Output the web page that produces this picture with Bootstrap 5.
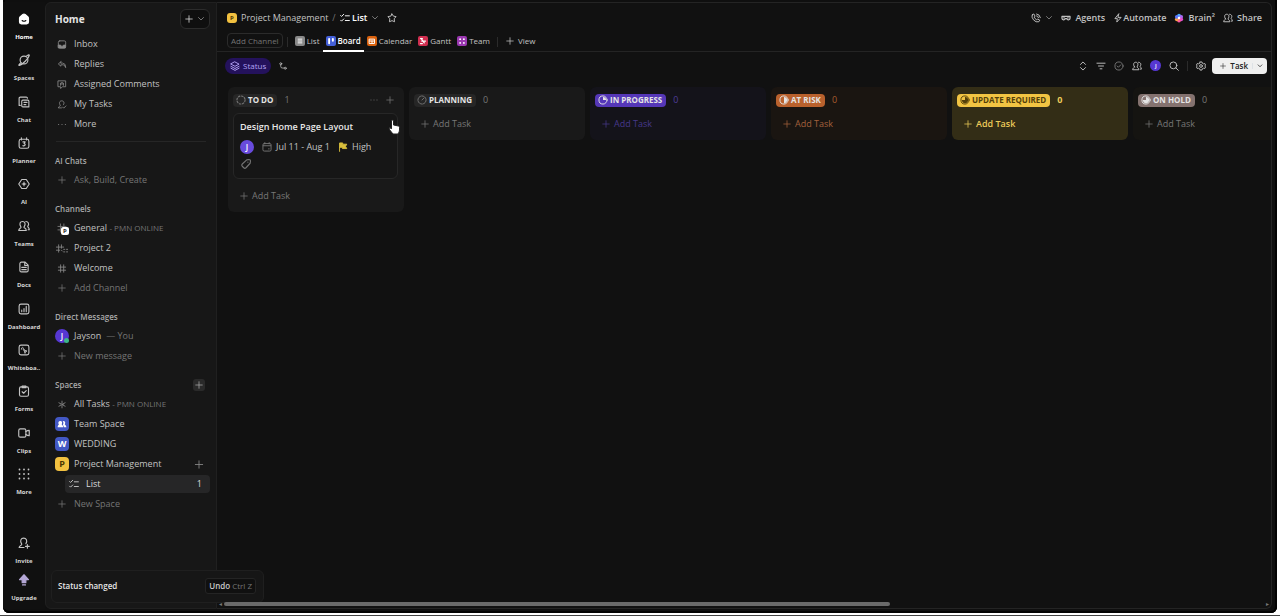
<!DOCTYPE html>
<html lang="en">
<head>
<meta charset="utf-8">
<meta name="viewport" content="width=device-width, initial-scale=1">
<title>Project Management - Board</title>
<link href="https://cdn.jsdelivr.net/npm/bootstrap@5.3.0/dist/css/bootstrap.min.css" rel="stylesheet">
<style>
:root{--ink:#c2c2c2;--dim:#757575;--panel:#171717;--line:#242424}
body{font-family:"Open Sans","Noto Sans",sans-serif;font-size:9px;line-height:12px;color:var(--ink);background:#fff}
a{color:inherit;text-decoration:none}
button{background:none;border:0;padding:0;color:inherit;font:inherit;line-height:12px;white-space:nowrap}
svg{flex:none;display:block;width:12px;height:12px;fill:none;stroke:currentColor;stroke-width:1.5;stroke-linecap:round;stroke-linejoin:round}
.i-sm{width:8px;height:8px}
.i-md{width:10px;height:10px}
.i-lg{width:14px;height:14px;padding:1px}
.page{height:100vh;padding:0 3px 2px;border-bottom:1px solid #444}
.frame{background:#0f0f0f;border-radius:0 0 6px 6px;padding:2px 5px 4px 0;box-shadow:inset 0 -2px #030303,inset -2px 0 #030303,inset 2px 0 #080808}
.rail{width:42px;padding:10px 0 7px;font-size:6px;line-height:8px;font-weight:700;color:#d6d6d6;background:#101010}
.rail a{display:flex;flex-direction:column;align-items:center;gap:7px;white-space:nowrap}
.rail a svg{color:#c4c4c4}
.rail .top{height:calc(100% - 106px)}
.side{width:172px;background:var(--panel);border:1px solid #202020;border-radius:6px 0 0 6px;padding:1px 6px 0 9px}
.side-head{height:30px;color:#e4e4e4;font-size:10px;font-weight:700}
.new-btn{border:1px solid #2c2c2c;background:#0f0f0f;border-radius:6px;height:20px;width:30px}
.side ul{list-style:none;margin:0;padding:0}
.side li{display:flex;align-items:center;height:20px;white-space:nowrap}
.side li a,.side li>button{display:flex;align-items:center;gap:5px}
.side li>*>svg:first-child,.ico{width:14px}
.side li>*>svg:first-child{height:9px;color:#8a8a8a}
.side li>button.faint>svg:first-child{height:8px;color:#777}
.side .faint,.faint{color:var(--dim)}
.side h2{display:flex;align-items:center;justify-content:space-between;height:19px;margin:9px 5px 0 0;font-size:8px;font-weight:600;line-height:12px;color:#a9a9a9}
.side hr{margin:7px 4px 0 1px;border-color:#555}
.tiny{font-size:8px}
.sq{width:14px;height:14px;border-radius:4px;background:#4358c4;color:#fff;font-weight:700;display:flex;align-items:center;justify-content:center}
.sq.gold{background:#f2c140;color:#4a3500}
.sq.xs{width:10px;height:10px;border-radius:3px;font-size:6px}
.disc{width:14px;height:14px;border-radius:50%;background:#5637d2;color:#fff;font-size:8px;font-weight:600;display:flex;align-items:center;justify-content:center;position:relative}
.disc-sm{width:11px;height:11px;font-size:6px}
.dot{position:absolute;right:0;bottom:0;width:5px;height:5px;border-radius:50%;background:#3db88b}
.pin{position:absolute;left:6px;top:4px;width:8px;height:8px;border-radius:2px;background:#fff;color:#222;font-size:6px;line-height:8px;text-align:center;font-weight:700}
.sel{background:#262627;border-radius:4px;height:18px;margin:1px 0 1px 10px;padding:0 8px 0 2px;color:#dcdcdc;width:100%}
.side .sel>svg:first-child{height:10px;color:#c4c4c4}
.plusbox{background:#2a2a2a;border-radius:3px;padding:2px}
.work{background:#111;border:1px solid var(--line);border-left:0;border-radius:0 6px 6px 0;min-width:0}
.crumbs{height:29px;padding:0 9px 0 10px}
.views{height:20px;padding-left:10px;border-bottom:1px solid var(--line);font-size:8px;font-weight:500}
.views a{display:flex;align-items:center;gap:2px;height:20px;border-bottom:2px solid transparent;margin-bottom:-1px;padding:0 3px 1px}
.views a.on{border-color:#fff;color:#fff;font-weight:600}
.views button{margin-bottom:2px}
.tile{width:10px;height:10px;border-radius:2px;color:#fff}
.tile svg{width:10px;height:10px}
.add-ch{border:1px solid #2b2b2b;border-radius:4px;height:15px;padding:0 3px;color:#747474;line-height:12px}
.sep{width:1px;height:10px;background:#2b2b2b}
.tools{height:27px;padding:0 4px 0 8px}
.status{height:16px;border-radius:8px;background:#24125c;color:#b3a2f5;padding:0 5px;font-size:8px;font-weight:500;gap:3px}
.task-btn{background:#efefef;color:#222;border-radius:4px;height:16px;font-size:8px;font-weight:600;overflow:hidden;margin-left:-2px}
.task-btn svg{width:6px;height:6px}
.board{padding:8px 0 0 11px;gap:5px;overflow:hidden}
.lane{width:176px;flex:none;border-radius:6px;padding:6px 6px 9px 5px;background:#191919}
.lane header{height:14px}
.pill{height:13px;border-radius:4px;padding:0 4px 0 3px;gap:2px;font-size:8px;font-weight:700;color:#e4e4e4;background:#262626}
.num{margin-left:7px;color:#777}
.lane .add{display:flex;align-items:center;gap:4px;margin:11px 0 1px 7px;color:#777}
.lane .add svg{width:8px;height:8px}
.task{border:1px solid #272727;border-radius:6px;background:#161616;padding:7px 6px 8px;margin-top:6px;position:relative}
.task h3{font-size:9px;line-height:12px;font-weight:600;color:#e8e8e8;margin:0 0 7px}
.hand{position:absolute;right:-3px;top:5px;width:12px;height:16px}
.scroller{height:8px;padding:0 2px;gap:2px;color:#777;font-size:6px;position:relative;z-index:2}
.thumb{width:64%;height:4px;border-radius:2px;background:#6a6a6a}
.note{position:absolute;left:48px;bottom:10px;width:213px;height:33px;background:#161616;border:1px solid #1f1f1f;border-radius:6px;padding:0 7px 1px 6px;color:#e6e6e6;font-size:8px;font-weight:600}
.undo{background:#101010;border:1px solid #242424;border-radius:3px;height:16px;padding:0 3px;color:#c9c9c9}
</style>
</head>
<body>
<svg class="d-none" aria-hidden="true">
<symbol id="plus" viewBox="0 0 16 16"><path d="M8 1.500v13M1.500 8h13"/></symbol>
<symbol id="down" viewBox="0 0 16 16"><path stroke-width="2" d="M3 5l5 5 5-5"/></symbol>
<symbol id="home" viewBox="0 0 16 16"><path fill="currentColor" d="M2 7a3 3 0 0 1 1-2l3.500-3a2.300 2.300 0 0 1 3 0L13 5a3 3 0 0 1 1 2v5a2.500 2.500 0 0 1-2.500 2.500h-7A2.500 2.500 0 0 1 2 12z"/><path stroke="#111" d="M5.500 10q2.500 2 5 0"/></symbol>
<symbol id="planet" viewBox="0 0 16 16"><circle cx="8" cy="8" r="5.200"/><path d="M4 11.500C1 14 .5 15.500 2 15.200 6 14 14 6 15 2c.3-1.500-1.500-1-3.500.6"/></symbol>
<symbol id="chat" viewBox="0 0 16 16"><path d="M3 12.500H1.500V3a1.500 1.500 0 0 1 1.500-1.500h8A1.500 1.500 0 0 1 12.500 3"/><path d="M6.500 5.500H13a1.500 1.500 0 0 1 1.500 1.500v7.500h-8A1.500 1.500 0 0 1 5 13V7a1.500 1.500 0 0 1 1.500-1.500zM8 8.500h4M8 11.500h2.500"/></symbol>
<symbol id="cal" viewBox="0 0 16 16"><rect x="1.500" y="3" width="13" height="12" rx="2.500"/><path d="M4.500 1v3M11.500 1v3M6.500 6.500h3L8 8.800q2 .2 1.500 2-.8 1.500-3 .7"/></symbol>
<symbol id="ai" viewBox="0 0 16 16"><path d="M5 2h6l4 6-4 6H5L1 8z"/><path fill="currentColor" d="M8 4 9 7l3 1L9 9l-1 3L7 9 4 8 7 7z" stroke="none"/></symbol>
<symbol id="people" viewBox="0 0 16 16"><path d="M4 9.500C1 5 3 2 6 2s5 3 2 7.500c0 1.500 3 1 3 4.500H1c0-3 3-3 3-4.500zM10.500 2c3 0 5 3 2.500 6.500 0 1.500 2 1.500 2 4.500h-1.500"/></symbol>
<symbol id="person" viewBox="0 0 16 16"><path d="M8 14H1.500c0-3 4-2.500 3.500-4.500C2 5 4 1.500 7.500 1.500S13 5 10.500 9M10 12.500h5M12.500 10v5"/></symbol>
<symbol id="mytask" viewBox="0 0 16 16"><path d="M7 14H1.500c0-3 4-2.500 3.500-4.500C2 5 4 1.500 7.500 1.500S13 5 10.500 8.500M9 12.500l2 2 4-4"/></symbol>
<symbol id="doc" viewBox="0 0 16 16"><path d="M2.500 3.500a2 2 0 0 1 2-2h5l4 4v7a2 2 0 0 1-2 2h-7a2 2 0 0 1-2-2zM9 2v4h4M5 8.500h6M5 11.500h6"/></symbol>
<symbol id="dash" viewBox="0 0 16 16"><rect x="1.500" y="1.500" width="13" height="13" rx="2.500"/><path d="M5 11.500V9.500M8 11.500v-4M11 11.500v-7"/></symbol>
<symbol id="white" viewBox="0 0 16 16"><rect x="1.500" y="1.500" width="13" height="13" rx="2.500"/><path stroke-width="1.200" d="M4.500 7q0-2.500 1.500-2.500T7 7t1.500 0M8.500 8l3.500 1.500-2 .5-.5 2z"/></symbol>
<symbol id="form" viewBox="0 0 16 16"><rect x="2" y="2.500" width="12" height="12.500" rx="2"/><path d="M5.500 1.500h5v2h-5zM5.500 9l2 2 3.500-3.500"/></symbol>
<symbol id="clip" viewBox="0 0 16 16"><rect x="1" y="2.500" width="9.500" height="11" rx="2"/><path d="M10.500 6q2-1.500 4.500-1.500v7q-2.500 0-4.500-1.500"/></symbol>
<symbol id="grid" viewBox="0 0 16 16"><path stroke-width="2.400" d="M2 2h.01M8 2h.01M14 2h.01M2 8h.01M8 8h.01M14 8h.01M2 14h.01M8 14h.01M14 14h.01"/></symbol>
<symbol id="up" viewBox="0 0 16 16"><path fill="#b4a7d6" stroke="#b4a7d6" d="M8 1l6 6.500h-3.500v4h-5v-4H2zM6 14.500h4"/></symbol>
<symbol id="inbox" viewBox="0 0 16 16"><rect x="1.500" y="1.500" width="13" height="13" rx="2.500"/><path fill="currentColor" d="M2 9h3.500l1 2h3l1-2H14v5H2z"/></symbol>
<symbol id="reply" viewBox="0 0 16 16"><path d="M6 3 1.500 7 6 11V8.500h4q3 0 4.500 5Q15 6 9 5.500H6z"/></symbol>
<symbol id="comment" viewBox="0 0 16 16"><path d="M1.500 1.500h13v10.500H9l-3.500 3V12h-4zM5.500 9.500V5.500q2.500-2 5 0v4M5.500 7h5"/></symbol>
<symbol id="dots" viewBox="0 0 16 16"><path stroke-width="2" d="M2 8h.01M8 8h.01M14 8h.01"/></symbol>
<symbol id="hash" viewBox="0 0 16 16"><path d="M5.500 1.500v13M11 1.500v13M1.500 5.500h13M1.500 11h13"/></symbol>
<symbol id="hashlist" viewBox="0 0 22 16"><path d="M5 1.500v13M10 1.500v6M1 5.500h13M1 11h6M10 11l1.500 1.500M14 9.500h2M19 9.500h2M14 14h2M19 14h2"/></symbol>
<symbol id="star6" viewBox="0 0 16 16"><path d="M8 2v3.500M8 10.500V14M2.500 5l3 1.500M10.500 9.500l3 1.500M13.500 5l-3 1.500M5.500 9.500l-3 1.500"/><circle cx="8" cy="8" r="1.500"/></symbol>
<symbol id="tasks" viewBox="0 0 16 16"><path d="M1 4l1.500 1.500L6 2M1 11.500 2.500 13 6 9.500M8.500 4.500H15M8.500 12H15"/></symbol>
<symbol id="duo" viewBox="0 0 16 16"><path fill="currentColor" stroke="none" d="M1 13c0-3 2-3 2-4.500C1 5 3 3 5.500 3S9 5 7.500 8.500C7.500 10 10 10 10 13zM10 3c3 0 4 2.500 2.500 5.500C12.500 10 15 10 15 13h-4c0-3-2-3-1.500-4C11 6 10 4 9 3.500z"/></symbol>
<symbol id="star" viewBox="0 0 16 16"><path d="M8 1.500 10.200 5l4.300.8-3 3.400.6 4.800L8 12.200 3.900 14l.6-4.800-3-3.400L5.800 5z"/></symbol>
<symbol id="phone" viewBox="0 0 16 16"><path d="M2 3l2.500-1.500 2 3.500L5 6.500q1.500 3 4 4.500l1.500-1.500 3.500 2L12.500 14Q8 15.500 4 11T2 3zM9 4.500q2.500 0 3 3M9 1.500q5 .5 6 6"/></symbol>
<symbol id="agents" viewBox="0 0 20 16"><path stroke-width="2.500" d="M2 4.500h16v4a3 3 0 0 1-3 3h-1q-2 0-2.500-2.500h-3Q8 11.500 6 11.500H5a3 3 0 0 1-3-3zM5.500 7.500h1M13.500 7.500h1"/></symbol>
<symbol id="bolt" viewBox="0 0 16 16"><path d="M9 1.500 3 9h4l-1 5.500L13 7H8.500z"/></symbol>
<symbol id="brain" viewBox="0 0 16 16"><g stroke="none"><circle cx="8" cy="4" r="3" fill="#4aa8ff"/><circle cx="11.500" cy="6" r="3" fill="#a86cf5"/><circle cx="11.500" cy="10" r="3" fill="#e04fd0"/><circle cx="8" cy="12" r="3" fill="#ff5aa0"/><circle cx="4.500" cy="10" r="3" fill="#ff9f4a"/><circle cx="4.500" cy="6" r="3" fill="#5a76ff"/><circle cx="8" cy="8" r="2" fill="#fff"/></g></symbol>
<symbol id="layers" viewBox="0 0 16 16"><path d="M8 1.500 14.500 5 8 8.500 1.500 5zM1.500 8.500 8 12l6.500-3.500M1.500 11.500 8 15l6.500-3.500"/></symbol>
<symbol id="sub" viewBox="0 0 16 16"><circle cx="3.500" cy="3.500" r="2"/><circle cx="12.500" cy="12.500" r="2"/><path d="M3.500 5.500V9q0 3 3 3h3.500"/></symbol>
<symbol id="updown" viewBox="0 0 16 16"><path d="M4 5.500l4-4 4 4M4 10.500l4 4 4-4"/></symbol>
<symbol id="filter" viewBox="0 0 16 16"><path d="M1.500 3.500h13M4 8h8M6.500 12.500h3"/></symbol>
<symbol id="check" viewBox="0 0 16 16"><circle cx="8" cy="8" r="6.500"/><path d="M5 8l2 2 4-4"/></symbol>
<symbol id="find" viewBox="0 0 16 16"><circle cx="7" cy="7" r="5.500"/><path d="M11 11l4 4"/></symbol>
<symbol id="gear" viewBox="0 0 16 16"><path d="M6.500 1.500h3l.5 2 2 1 2-.5 1.300 2.500L14 8l1.300 1.500L14 12l-2-.5-2 1-.5 2h-3l-.5-2-2-1L2 12 .7 9.500 2 8 .7 6.500 2 4l2 .5 2-1z"/><circle cx="8" cy="8" r="2.200"/></symbol>
<symbol id="todo" viewBox="0 0 16 16"><circle cx="8" cy="8" r="6.500" stroke-dasharray="2.500 2.600" stroke-width="1.800"/></symbol>
<symbol id="plan" viewBox="0 0 16 16"><circle cx="8" cy="8" r="6.500" stroke-dasharray="3.500 1.500"/><path d="M8 8l3-3"/></symbol>
<symbol id="q1" viewBox="0 0 16 16"><circle cx="8" cy="8" r="6.500"/><path fill="currentColor" stroke="none" d="M8 8V3a5 5 0 0 1 5 5z"/></symbol>
<symbol id="q2" viewBox="0 0 16 16"><circle cx="8" cy="8" r="6.500"/><path fill="currentColor" stroke="none" d="M8 13V3a5 5 0 0 1 0 10z"/></symbol>
<symbol id="q3" viewBox="0 0 16 16"><circle cx="8" cy="8" r="6.500"/><path fill="currentColor" stroke="none" d="M8 8V3a5 5 0 1 1-5 5z"/></symbol>
<symbol id="date" viewBox="0 0 16 16"><rect x="1.500" y="2.500" width="13" height="12" rx="2"/><path d="M2 6h12M4.500 1v2M11.500 1v2M10.500 11h1"/></symbol>
<symbol id="flag" viewBox="0 0 16 16"><path fill="#d9bf3c" stroke="#d9bf3c" d="M2.500 15V1.500h5v2H14L12 7l2 3.500H7v-2H2.500"/></symbol>
<symbol id="tag" viewBox="0 0 16 16"><path d="M9 2.500 12 2q2 0 2 2l-.5 3L8 13q-1.500 1.500-3 0l-2-2q-1.500-1.500 0-3zM10.500 5.500h.01"/></symbol>
</svg>

<div class="page">
<div class="frame d-flex h-100 position-relative">
<nav class="rail d-flex flex-column justify-content-between flex-shrink-0" aria-label="Main">
<div class="top d-flex flex-column justify-content-between">
<a href="#" class="text-white"><svg class="i-lg text-white"><use href="#home"/></svg>Home</a>
<a href="#"><svg class="i-lg"><use href="#planet"/></svg>Spaces</a>
<a href="#"><svg class="i-lg"><use href="#chat"/></svg>Chat</a>
<a href="#"><svg class="i-lg"><use href="#cal"/></svg>Planner</a>
<a href="#"><svg class="i-lg"><use href="#ai"/></svg>AI</a>
<a href="#"><svg class="i-lg"><use href="#people"/></svg>Teams</a>
<a href="#"><svg class="i-lg"><use href="#doc"/></svg>Docs</a>
<a href="#"><svg class="i-lg"><use href="#dash"/></svg>Dashboard</a>
<a href="#"><svg class="i-lg"><use href="#white"/></svg>Whiteboa..</a>
<a href="#"><svg class="i-lg"><use href="#form"/></svg>Forms</a>
<a href="#"><svg class="i-lg"><use href="#clip"/></svg>Clips</a>
<a href="#"><svg class="i-lg"><use href="#grid"/></svg>More</a>
</div>
<div class="d-flex flex-column gap-2">
<a href="#"><svg class="i-lg"><use href="#person"/></svg>Invite</a>
<a href="#"><svg class="i-lg"><use href="#up"/></svg>Upgrade</a>
</div>
</nav>

<aside class="side flex-shrink-0">
<div class="side-head d-flex align-items-center justify-content-between"><span>Home</span><button class="new-btn d-flex align-items-center justify-content-center gap-1" aria-label="Create"><svg class="i-sm"><use href="#plus"/></svg><svg class="i-sm faint"><use href="#down"/></svg></button></div>
<ul>
<li><a href="#"><svg><use href="#inbox"/></svg>Inbox</a></li>
<li><a href="#"><svg><use href="#reply"/></svg>Replies</a></li>
<li><a href="#"><svg><use href="#comment"/></svg>Assigned Comments</a></li>
<li><a href="#"><svg><use href="#mytask"/></svg>My Tasks</a></li>
<li><a href="#"><svg><use href="#dots"/></svg>More</a></li>
</ul>
<hr>
<h2>AI Chats</h2>
<ul><li><button class="faint"><svg><use href="#plus"/></svg>Ask, Build, Create</button></li></ul>
<h2>Channels</h2>
<ul>
<li><a href="#"><span class="ico position-relative d-flex justify-content-center"><svg class="i-md faint"><use href="#hash"/></svg><span class="pin">P</span></span><span>General <span class="faint tiny">- PMN ONLINE</span></span></a></li>
<li><a href="#"><svg><use href="#hashlist"/></svg>Project 2</a></li>
<li><a href="#"><svg><use href="#hash"/></svg>Welcome</a></li>
<li><button class="faint"><svg><use href="#plus"/></svg>Add Channel</button></li>
</ul>
<h2>Direct Messages</h2>
<ul>
<li><a href="#"><span class="disc">J<span class="dot"></span></span>Jayson <span class="faint">— You</span></a></li>
<li><button class="faint"><svg><use href="#plus"/></svg>New message</button></li>
</ul>
<h2>Spaces <button class="plusbox" aria-label="Add space"><svg class="i-sm"><use href="#plus"/></svg></button></h2>
<ul>
<li><a href="#"><svg><use href="#star6"/></svg><span>All Tasks <span class="faint tiny">- PMN ONLINE</span></span></a></li>
<li><a href="#"><span class="sq"><svg class="i-md"><use href="#duo"/></svg></span>Team Space</a></li>
<li><a href="#"><span class="sq">W</span>WEDDING</a></li>
<li class="justify-content-between pe-1"><a href="#"><span class="sq gold">P</span>Project Management</a><button aria-label="Add to Project Management"><svg><use href="#plus"/></svg></button></li>
<li><a href="#" class="sel"><svg><use href="#tasks"/></svg><span class="flex-grow-1">List</span><span>1</span></a></li>
<li><button class="faint"><svg><use href="#plus"/></svg>New Space</button></li>
</ul>
</aside>

<main class="work flex-grow-1 d-flex flex-column">
<div class="crumbs d-flex align-items-center justify-content-between">
<div class="d-flex align-items-center gap-1">
<span class="sq gold xs">P</span><a href="#">Project Management</a><span class="faint">/</span>
<button class="d-flex align-items-center text-white fw-semibold"><svg class="i-md"><use href="#tasks"/></svg>&nbsp;List<svg class="i-sm faint ms-1"><use href="#down"/></svg></button>
<button class="ms-1" aria-label="Favourite"><svg class="i-md"><use href="#star"/></svg></button>
</div>
<div class="d-flex align-items-center gap-2 fw-semibold">
<button class="d-flex align-items-center gap-1" aria-label="Call"><svg class="i-md"><use href="#phone"/></svg><svg class="i-sm faint"><use href="#down"/></svg></button>
<button class="d-flex align-items-center gap-1"><svg class="i-md"><use href="#agents"/></svg>Agents</button>
<button class="d-flex align-items-center"><svg class="i-md"><use href="#bolt"/></svg>Automate</button>
<button class="d-flex align-items-center gap-1"><svg class="i-md"><use href="#brain"/></svg>Brain²</button>
<button class="d-flex align-items-center gap-1"><svg class="i-md"><use href="#people"/></svg>Share</button>
</div>
</div>
<div class="views d-flex align-items-center">
<button class="add-ch fw-normal me-1">Add Channel</button><span class="sep"></span>
<a href="#" class="ms-1"><span class="tile" style="background:#888"><svg viewBox="0 0 16 16"><path d="M5 5h6M5 8h6M5 11h6"/></svg></span>List</a>
<a href="#" class="on"><span class="tile" style="background:#4460d8"><svg viewBox="0 0 16 16"><path stroke-width="3" d="M5 4.500v7M11 4.500v3"/></svg></span>Board</a>
<a href="#"><span class="tile" style="background:#d9620f"><svg viewBox="0 0 16 16"><path d="M4 5h8v7H4zM4 8h8M8 8v4"/></svg></span>Calendar</a>
<a href="#"><span class="tile" style="background:#d12f50"><svg viewBox="0 0 16 16"><path stroke-width="2" d="M4 4h3M6 8h6M4 12h3M5 4l5 7"/></svg></span>Gantt</a>
<a href="#"><span class="tile" style="background:#9a38b0"><svg viewBox="0 0 16 16"><path stroke-width="3" d="M5 5h.01M11 5h.01M5 11h.01M11 11h.01"/></svg></span>Team</a>
<span class="sep mx-1"></span>
<button class="d-flex align-items-center gap-1 ms-1"><svg class="i-sm"><use href="#plus"/></svg>View</button>
</div>
<div class="tools d-flex align-items-center justify-content-between">
<div class="d-flex align-items-center gap-1"><button class="status d-flex align-items-center me-1"><svg class="i-md"><use href="#layers"/></svg>Status</button><button aria-label="Subtasks"><svg class="i-sm"><use href="#sub"/></svg></button></div>
<div class="d-flex align-items-center gap-2">
<button aria-label="Collapse"><svg class="i-md"><use href="#updown"/></svg></button>
<button aria-label="Filter"><svg class="i-md"><use href="#filter"/></svg></button>
<button aria-label="Closed"><svg class="i-md faint"><use href="#check"/></svg></button>
<button aria-label="Assignees"><svg class="i-md"><use href="#people"/></svg></button>
<button class="disc disc-sm">J</button>
<button aria-label="Search"><svg class="i-md"><use href="#find"/></svg></button>
<span class="sep"></span>
<button aria-label="Settings"><svg class="i-md"><use href="#gear"/></svg></button>
<div class="task-btn d-flex align-items-center"><button class="d-flex align-items-center gap-1 px-1"><svg class="ms-1"><use href="#plus"/></svg>Task</button><button class="border-start px-1" aria-label="More"><svg><use href="#down"/></svg></button></div>
</div>
</div>
<div class="board d-flex align-items-start flex-grow-1">
<section class="lane">
<header class="d-flex align-items-center"><span class="pill d-flex align-items-center"><svg class="i-md faint"><use href="#todo"/></svg>TO DO</span><span class="num">1</span><span class="ms-auto d-flex gap-2 faint me-1"><svg class="i-sm"><use href="#dots"/></svg><svg class="i-sm"><use href="#plus"/></svg></span></header>
<article class="task">
<h3>Design Home Page Layout</h3>
<div class="d-flex align-items-center mb-1"><span class="disc me-2" style="background:#684bdd">J</span><svg class="i-md me-1 faint"><use href="#date"/></svg><span class="me-2">Jul 11 - Aug 1</span><svg class="i-md me-1"><use href="#flag"/></svg>High</div>
<svg class="faint"><use href="#tag"/></svg>
<svg class="hand" viewBox="0 0 12 16"><path fill="#fff" stroke="#222" stroke-width="1" d="M3.500 9V2a1 1 0 0 1 2 0v4l5 1q1 .5 1 1.500V11q0 2-1.500 4H5L1 10q0-2 2.500-.5z"/></svg>
</article>
<button class="add"><svg><use href="#plus"/></svg>Add Task</button>
</section>
<section class="lane"><header class="d-flex align-items-center"><span class="pill d-flex align-items-center"><svg class="i-md faint"><use href="#plan"/></svg>PLANNING</span><span class="num">0</span></header><button class="add"><svg><use href="#plus"/></svg>Add Task</button></section>
<section class="lane" style="background:#14131a"><header class="d-flex align-items-center"><span class="pill d-flex align-items-center" style="background:#5537b8"><svg class="i-md"><use href="#q1"/></svg>IN PROGRESS</span><span class="num" style="color:#4f3d9c">0</span></header><button class="add" style="color:#46388a"><svg><use href="#plus"/></svg>Add Task</button></section>
<section class="lane" style="background:#1a1511"><header class="d-flex align-items-center"><span class="pill d-flex align-items-center" style="background:#b9612d"><svg class="i-md"><use href="#q2"/></svg>AT RISK</span><span class="num" style="color:#a85b2e">0</span></header><button class="add" style="color:#a3603c"><svg><use href="#plus"/></svg>Add Task</button></section>
<section class="lane" style="background:#332d16"><header class="d-flex align-items-center"><span class="pill d-flex align-items-center" style="background:#f2c443;color:#54400a"><svg class="i-md"><use href="#q3"/></svg>UPDATE REQUIRED</span><span class="num fw-bold" style="color:#eccb5a">0</span></header><button class="add fw-semibold" style="color:#eccb5a"><svg><use href="#plus"/></svg>Add Task</button></section>
<section class="lane" style="background:#151411"><header class="d-flex align-items-center"><span class="pill d-flex align-items-center" style="background:#84726f"><svg class="i-md"><use href="#q3"/></svg>ON HOLD</span><span class="num">0</span></header><button class="add"><svg><use href="#plus"/></svg>Add Task</button></section>
</div>
<div class="scroller d-flex align-items-center"><span>◂</span><div class="flex-grow-1"><div class="thumb"></div></div><span>▸</span></div>
</main>
<div class="note d-flex align-items-center justify-content-between" role="status"><span>Status changed</span><button class="undo">Undo <span class="fw-normal faint">Ctrl Z</span></button></div>
</div>
</div>
<script src="https://cdn.jsdelivr.net/npm/bootstrap@5.3.0/dist/js/bootstrap.bundle.min.js"></script>
</body>
</html>
